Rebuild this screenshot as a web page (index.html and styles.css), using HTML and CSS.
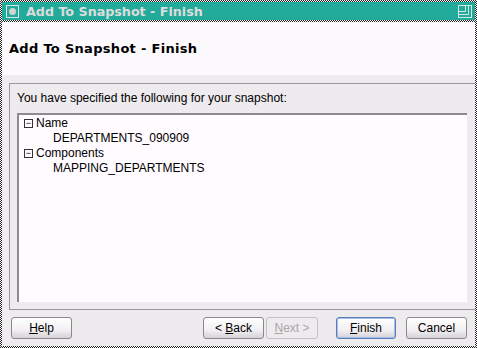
FILE: index.html
```html
<!DOCTYPE html>
<html lang="en">
<head>
    <meta charset="UTF-8">
    <title>Add To Snapshot - Finish</title>
    <link rel="stylesheet" href="styles.css">
</head>
<body>
    <div class="window">
        <div class="titlebar">
            <span class="win-icon"><span class="dot"></span></span>
            <span class="win-title">Add To Snapshot - Finish</span>
            <span class="max-icon">
                <svg width="14" height="13" viewBox="0 0 14 13">
                    <rect x="0.5" y="0.5" width="13" height="12" fill="none" stroke="#d6e6e2"/>
                    <path d="M0.5 6.5 H7.5 V0.5" fill="none" stroke="#d6e6e2"/>
                    <path d="M10.5 0.5 V9.5 H0.5" fill="none" stroke="#d6e6e2"/>
                </svg>
            </span>
        </div>
        <div class="content">
            <div class="header">
                <h1>Add To Snapshot - Finish</h1>
            </div>
            <div class="panel">
                <p class="intro">You have specified the following for your snapshot:</p>
                <div class="tree">
                    <div class="node"><span class="toggle">−</span>Name</div>
                    <div class="leaf">DEPARTMENTS_090909</div>
                    <div class="node"><span class="toggle">−</span>Components</div>
                    <div class="leaf">MAPPING_DEPARTMENTS</div>
                </div>
            </div>
            <div class="buttons">
                <button class="btn"><u>H</u>elp</button>
                <div class="spacer"></div>
                <button class="btn">&lt; <u>B</u>ack</button>
                <button class="btn disabled"><u>N</u>ext &gt;</button>
                <button class="btn default"><u>F</u>inish</button>
                <button class="btn">Cancel</button>
            </div>
        </div>
    </div>
</body>
</html>
```

FILE: styles.css
```css
html, body {
    margin: 0;
    padding: 0;
}
body {
    width: 477px;
    height: 348px;
    font-family: "Liberation Sans", Arial, sans-serif;
    font-size: 12px;
    color: #000;
}
.window {
    box-sizing: border-box;
    width: 477px;
    height: 348px;
    padding: 2px;
    display: flex;
    flex-direction: column;
    background-color: #fff;
    background-image: repeating-conic-gradient(#222 0 25%, #fff 0 50%);
    background-size: 2px 2px;
}
.titlebar {
    height: 18px;
    margin-bottom: 2px;
    background-color: #22aa9a;
    display: flex;
    align-items: center;
    color: #dcdcdc;
}
.win-icon {
    box-sizing: border-box;
    width: 13px;
    height: 13px;
    margin-left: 4px;
    border: 1px solid #d6e6e2;
    display: flex;
    align-items: center;
    justify-content: center;
}
.dot {
    width: 7px;
    height: 7px;
    border-radius: 50%;
    background-color: #d2d2d2;
}
.win-title {
    margin-left: 7px;
    font-family: "DejaVu Sans", sans-serif;
    font-size: 12.7px;
    font-weight: bold;
}
.max-icon {
    margin-left: auto;
    margin-right: 3px;
    display: flex;
}
.content {
    flex: 1;
    display: flex;
    flex-direction: column;
    background-color: #eeebee;
}
.header {
    height: 53px;
    background-color: #fdfafd;
    display: flex;
    align-items: center;
}
.header h1 {
    margin: 0 0 0 7px;
    font-family: "DejaVu Sans", sans-serif;
    font-size: 13px;
    font-weight: bold;
    letter-spacing: 0.3px;
}
.panel {
    margin: 8px 0 0 7px;
    height: 227px;
    box-sizing: border-box;
    border-top: 1px solid #9a989a;
    border-left: 1px solid #9a989a;
    border-bottom: 1px solid #9a989a;
    padding: 0 8px 7px 7px;
    display: flex;
    flex-direction: column;
}
.intro {
    margin: 0;
    height: 29px;
    line-height: 29px;
}
.tree {
    flex: 1;
    background-color: #fffbff;
    border-top: 2px solid #8c8a8c;
    border-left: 2px solid #8c8a8c;
    padding: 1px 0 0 5px;
}
.node, .leaf {
    height: 15px;
    line-height: 15px;
    display: flex;
    align-items: center;
}
.leaf {
    padding-left: 29px;
}
.toggle {
    box-sizing: border-box;
    width: 9px;
    height: 9px;
    border: 1px solid #333;
    margin-right: 3px;
    font-size: 9px;
    line-height: 6px;
    text-align: center;
    overflow: hidden;
}
.buttons {
    flex: 1;
    display: flex;
    align-items: center;
    padding: 0 8px 0 9px;
    gap: 2px;
}
.spacer {
    flex: 1;
}
.btn {
    box-sizing: border-box;
    width: 61px;
    height: 22px;
    padding: 0;
    font-family: "Liberation Sans", Arial, sans-serif;
    font-size: 12px;
    color: #000;
    border: 1px solid #8a888a;
    border-radius: 3px;
    background: linear-gradient(#ffffff, #f2f0f2 60%, #d4d2d4);
}
.btn.disabled {
    width: 52px;
    color: #a8a6a8;
    border-color: #c4c2c4;
    background: #eeebee;
    margin-right: 16px;
}
.btn.default {
    width: 60px;
    border-color: #5a7cb8;
    box-shadow: inset 0 0 0 1px #a8c0e8;
    margin-right: 8px;
}
```
